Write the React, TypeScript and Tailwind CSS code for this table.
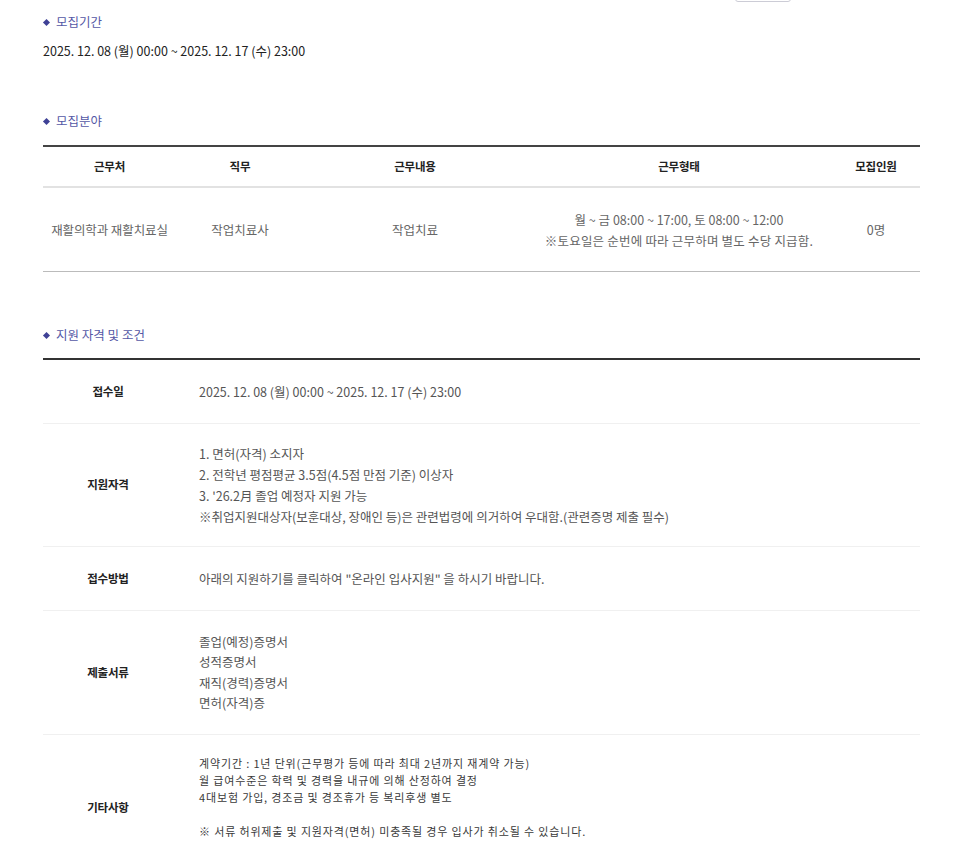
const font = { fontFamily: '"Noto Sans CJK KR", "Noto Sans", sans-serif' };

function Heading({ children }: { children: React.ReactNode }) {
  return (
    <div className="flex items-center h-[20px]">
      <span className="w-[5px] h-[5px] bg-[#3f4196] rotate-45 ml-[1px] mr-[7px]" />
      <span className="text-[12.5px] text-[#5558a6]">{children}</span>
    </div>
  );
}

const cols = "grid grid-cols-[133px_128px_222px_306px_88px]";

function InfoRow({ label, children, last }: { label: string; children: React.ReactNode; last?: boolean }) {
  return (
    <div className={`grid grid-cols-[130px_1fr] ${last ? "" : "border-b border-[#f0f0f0]"}`}>
      <div className="flex items-center justify-center text-[11.5px] font-bold text-[#222] tracking-[-0.2px]">
        {label}
      </div>
      <div className="pl-[26px] text-[#555]">{children}</div>
    </div>
  );
}

export default function App() {
  return (
    <div className="relative bg-white w-[958px] h-[858px] overflow-hidden" style={font}>
      <div className="absolute left-[735px] top-[-18px] w-[56px] h-[20px] border border-[#ccccd6] rounded-[3px]" />

      <div className="pl-[43px] pt-[12px] w-[920px]">
        <Heading>모집기간</Heading>
        <div className="mt-[9px] text-[12.5px] leading-[20px] text-[#222]">
          2025. 12. 08 (월) 00:00 ~ 2025. 12. 17 (수) 23:00
        </div>

        <div className="mt-[50px]">
          <Heading>모집분야</Heading>
        </div>

        <div className="mt-[14px] border-t-2 border-[#444]">
          <div className={`${cols} h-[41px] items-center text-center text-[11.5px] font-bold text-[#222] tracking-[-0.2px] border-b-2 border-[#e2e2e2]`}>
            <div>근무처</div>
            <div>직무</div>
            <div>근무내용</div>
            <div>근무형태</div>
            <div>모집인원</div>
          </div>
          <div className={`${cols} h-[84px] items-center text-center text-[12.5px] leading-[21px] text-[#666] border-b border-[#bbb]`}>
            <div className="tracking-[-0.1px]">재활의학과 재활치료실</div>
            <div>작업치료사</div>
            <div>작업치료</div>
            <div>
              <div>월 ~ 금 08:00 ~ 17:00, 토 08:00 ~ 12:00</div>
              <div className="tracking-[0.2px]">※토요일은 순번에 따라 근무하며 별도 수당 지급함.</div>
            </div>
            <div>0명</div>
          </div>
        </div>

        <div className="mt-[53px]">
          <Heading>지원 자격 및 조건</Heading>
        </div>

        <div className="mt-[13px] border-t-2 border-[#333] text-[12.5px]">
          <InfoRow label="접수일">
            <div className="py-[21px] leading-[21px]">2025. 12. 08 (월) 00:00 ~ 2025. 12. 17 (수) 23:00</div>
          </InfoRow>
          <InfoRow label="지원자격">
            <div className="py-[19px] leading-[21px]">
              <div>1. 면허(자격) 소지자</div>
              <div>2. 전학년 평점평균 3.5점(4.5점 만점 기준) 이상자</div>
              <div>3. '26.2月 졸업 예정자 지원 가능</div>
              <div>※취업지원대상자(보훈대상, 장애인 등)은 관련법령에 의거하여 우대함.(관련증명 제출 필수)</div>
            </div>
          </InfoRow>
          <InfoRow label="접수방법">
            <div className="py-[21px] leading-[21px]">아래의 지원하기를 클릭하여 "온라인 입사지원" 을 하시기 바랍니다.</div>
          </InfoRow>
          <InfoRow label="제출서류">
            <div className="py-[21px] leading-[20.3px]">
              <div>졸업(예정)증명서</div>
              <div>성적증명서</div>
              <div>재직(경력)증명서</div>
              <div>면허(자격)증</div>
            </div>
          </InfoRow>
          <InfoRow label="기타사항" last>
            <div className="pt-[20px] pb-[22px] leading-[17px] text-[11px] tracking-[0.85px] text-[#3a3a3a]">
              <div>계약기간 : 1년 단위(근무평가 등에 따라 최대 2년까지 재계약 가능)</div>
              <div>월 급여수준은 학력 및 경력을 내규에 의해 산정하여 결정</div>
              <div>4대보험 가입, 경조금 및 경조휴가 등 복리후생 별도</div>
              <div>&nbsp;</div>
              <div>※ 서류 허위제출 및 지원자격(면허) 미충족될 경우 입사가 취소될 수 있습니다.</div>
              <div>&nbsp;</div>
            </div>
          </InfoRow>
        </div>
      </div>
    </div>
  );
}
